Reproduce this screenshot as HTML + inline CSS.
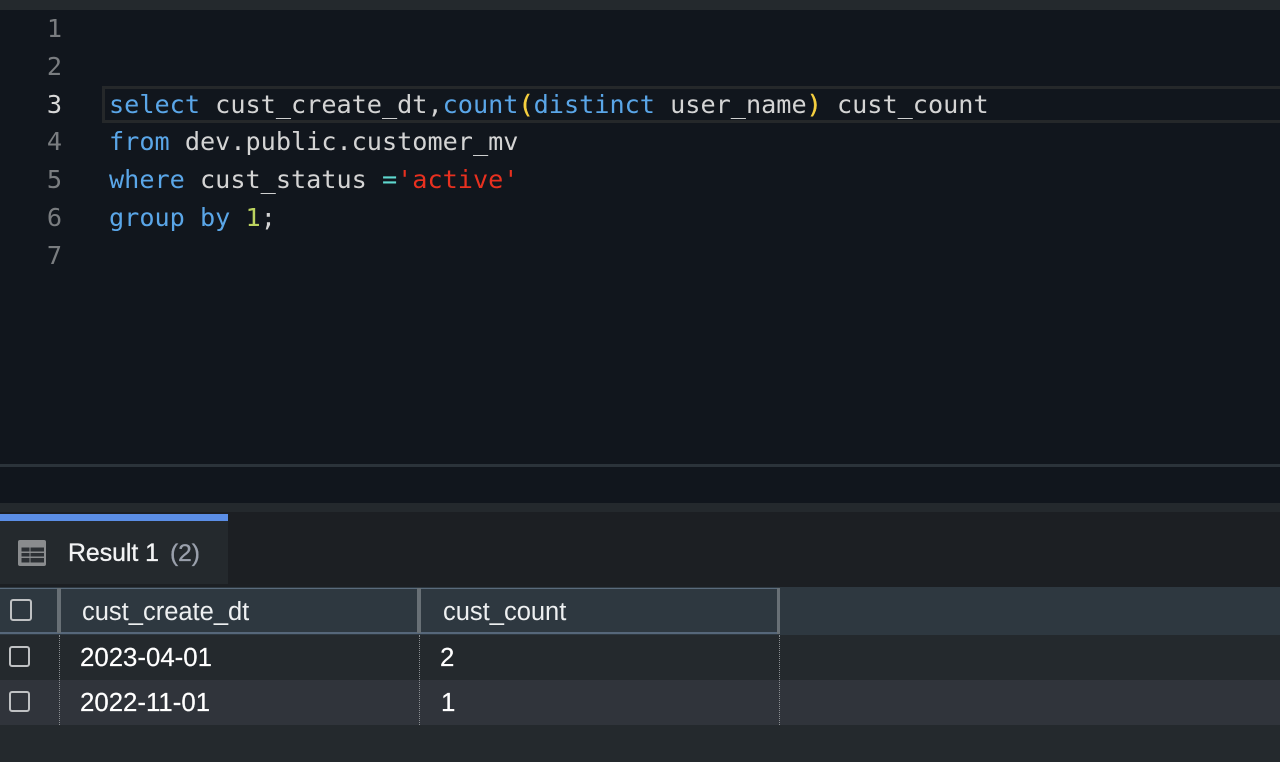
<!DOCTYPE html>
<html>
<head>
<meta charset="utf-8">
<style>
html,body{margin:0;padding:0;background:#24292d;}
#p{position:relative;width:1280px;height:762px;overflow:hidden;background:#24292d;font-family:"Liberation Sans",sans-serif;}
#p div{position:absolute;box-sizing:border-box;}
.ln,.cd{font-family:"DejaVu Sans Mono",monospace;font-size:25.2px;line-height:38px;height:38px;white-space:pre;}
.ln{left:30px;width:32px;text-align:right;color:#7a7d80;}
.cd{left:109px;color:#d4d4d4;}
.k{color:#5aa6e8}.s{color:#e8301f}.o{color:#5fd8cf}.n{color:#bcd35f}.b{color:#f5cf3f;-webkit-text-stroke:.4px #f5cf3f}
.t{white-space:pre;color:#fff;font-size:25.8px;line-height:30px;height:30px;-webkit-text-stroke:.2px #fff;}
.h{color:#eef0f1;font-size:25.5px;-webkit-text-stroke:0;}
.cb{width:22px;height:22px;border:2px solid #bfc1c3;border-radius:3px;}
.dot{width:0;border-left:1px dotted #8b8f92;}
</style>
</head>
<body>
<div id="p">
<div style="left:0;top:0;width:1280px;height:10px;background:#24292d"></div>
<div style="left:0;top:10px;width:1280px;height:493px;background:#11161d"></div>
<div style="left:0;top:464px;width:1280px;height:3px;background:#2b333a"></div>
<div style="left:102px;top:86px;width:1178px;height:37px;border:3px solid #25282a;border-right:0"></div>

<div class="ln" style="top:10px">1</div>
<div class="ln" style="top:48px">2</div>
<div class="ln" style="top:86px;color:#d8d8d8">3</div>
<div class="ln" style="top:123px">4</div>
<div class="ln" style="top:161px">5</div>
<div class="ln" style="top:199px">6</div>
<div class="ln" style="top:237px">7</div>

<div class="cd" style="top:86px"><span class="k">select</span> cust_create_dt,<span class="k">count</span><span class="b">(</span><span class="k">distinct</span> user_name<span class="b">)</span> cust_count</div>
<div class="cd" style="top:123px"><span class="k">from</span> dev.public.customer_mv</div>
<div class="cd" style="top:161px"><span class="k">where</span> cust_status <span class="o">=</span><span class="s">'active'</span></div>
<div class="cd" style="top:199px"><span class="k">group</span> <span class="k">by</span> <span class="n">1</span>;</div>

<div style="left:0;top:503px;width:1280px;height:9px;background:#24292d"></div>
<div style="left:0;top:512px;width:1280px;height:75px;background:#1c1f23"></div>
<div style="left:0;top:514px;width:228px;height:70px;background:#24292d"></div>
<div style="left:0;top:514px;width:228px;height:7px;background:#5b8ee6"></div>

<svg style="position:absolute;left:18px;top:540px" width="28" height="26" viewBox="0 0 28 26">
<rect width="28" height="26" rx="2" fill="#8a8c8e"/>
<path d="M3.5 7.5h8v4h-8zM12.5 7.5h13.5v4H12.5zM3.5 13h8v3.5h-8zM12.5 13h13.5v3.5H12.5zM3.5 18h8v4.5h-8zM12.5 18h13.5v4.5H12.5z" fill="#2c3034"/>
</svg>
<div class="t" style="left:68px;top:539px;font-size:24.8px;color:#f2f3f4;-webkit-text-stroke:.35px #f2f3f4">Result 1</div>
<div class="t" style="left:170px;top:539px;font-size:24.5px;color:#9aa0ac;-webkit-text-stroke:.35px #9aa0ac">(2)</div>

<div style="left:0;top:587px;width:1280px;height:48px;background:#2e3840"></div>
<div style="left:0;top:588px;width:780px;height:1px;background:#5a6b7c"></div>
<div style="left:0;top:632px;width:780px;height:2px;background:#56677a"></div>
<div style="left:57px;top:588px;width:4px;height:45px;background:#687076"></div>
<div style="left:417px;top:588px;width:4px;height:45px;background:#687076"></div>
<div style="left:777px;top:588px;width:3px;height:46px;background:#687076"></div>

<div class="cb" style="left:10px;top:599px"></div>
<div class="t h" style="left:82px;top:597px">cust_create_dt</div>
<div class="t h" style="left:443px;top:597px">cust_count</div>

<div style="left:0;top:635px;width:1280px;height:45px;background:#24292d"></div>
<div style="left:0;top:680px;width:1280px;height:45px;background:#30343b"></div>
<div class="dot" style="left:59px;top:635px;height:90px"></div>
<div class="dot" style="left:419px;top:635px;height:90px"></div>
<div class="dot" style="left:779px;top:635px;height:90px"></div>

<div class="cb" style="left:9px;top:646px;width:21px;height:21px"></div>
<div class="cb" style="left:9px;top:691px;width:21px;height:21px"></div>
<div class="t" style="left:80px;top:643px">2023-04-01</div>
<div class="t" style="left:80px;top:688px">2022-11-01</div>
<div class="t" style="left:440px;top:643px">2</div>
<div class="t" style="left:441px;top:688px">1</div>
</div>
</body>
</html>
